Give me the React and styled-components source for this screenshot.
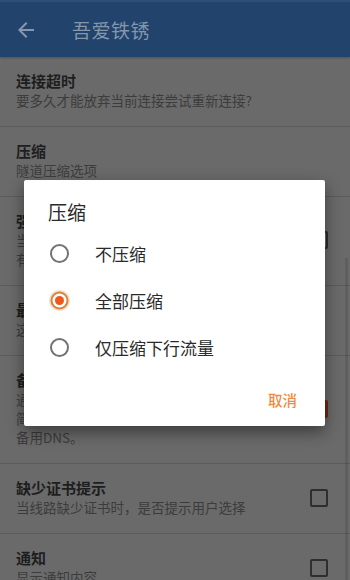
import React from "react";
import styled, { createGlobalStyle } from "styled-components";

const Global = createGlobalStyle`
  html, body { margin: 0; padding: 0; background: #6a6a6a; }
  body { font-family: "Noto Sans CJK SC", "Noto Sans", sans-serif; }
  * { box-sizing: border-box; }
`;

const Screen = styled.div`
  position: relative;
  width: 350px;
  height: 580px;
  overflow: hidden;
  background: #6a6a6a;
`;

const AppBar = styled.header`
  height: 57px;
  display: flex;
  align-items: center;
  background: #22436b;
  border-top: 2px solid #2d4e77;
  box-shadow: 0 1px 2px rgba(0, 0, 0, 0.25);
  padding: 0 0 0 14px;
`;

const BackIcon = styled.svg`
  width: 24px;
  height: 24px;
  fill: #8598ae;
  flex: none;
`;

const AppTitle = styled.h1`
  margin: 0 0 0 34px;
  font-size: 19px;
  font-weight: 400;
  color: #8497ad;
  letter-spacing: 0.5px;
`;

const List = styled.div`
  display: flex;
  flex-direction: column;
`;

const Item = styled.div`
  display: flex;
  align-items: center;
  padding: 14px 22px 16px 16px;
  border-bottom: 1px solid #5c5c5c;
`;

const ItemText = styled.div`
  flex: 1;
  min-width: 0;
`;

const ItemTitle = styled.div`
  font-size: 15px;
  line-height: 20px;
  font-weight: 700;
  color: #1e1e1e;
`;

const ItemSub = styled.div`
  font-size: 13.5px;
  line-height: 19px;
  color: #3c3c3c;
  white-space: pre-line;
`;

const Check = styled.span`
  flex: none;
  width: 18px;
  height: 18px;
  border-radius: 2px;
  border: 2px solid ${(p) => (p.$on ? "#6a2a12" : "#2e2e2e")};
  background: ${(p) => (p.$on ? "#6a2a12" : "transparent")};
  margin-left: 12px;
`;

const ScrollThumb = styled.div`
  position: absolute;
  right: 2px;
  top: 258px;
  width: 3px;
  height: 330px;
  background: rgba(0, 0, 0, 0.1);
`;

const Dialog = styled.div`
  position: absolute;
  top: 180px;
  left: 24px;
  width: 301px;
  background: #ffffff;
  border-radius: 2px;
  box-shadow: 0 6px 16px rgba(0, 0, 0, 0.45);
  padding: 20px 0 9px;
  display: flex;
  flex-direction: column;
`;

const DialogTitle = styled.div`
  padding: 0 24px;
  font-size: 19px;
  line-height: 24px;
  color: #2b2b2b;
`;

const Options = styled.div`
  margin-top: 6px;
  display: flex;
  flex-direction: column;
`;

const Option = styled.label`
  height: 47px;
  display: flex;
  align-items: center;
  padding-left: 25px;
  gap: 25px;
  font-size: 17px;
  color: #2a2a2a;
`;

const Actions = styled.div`
  margin-top: 10px;
  display: flex;
  justify-content: flex-end;
  padding-right: 20px;
`;

const TextButton = styled.button`
  height: 36px;
  border: none;
  background: none;
  padding: 0 8px;
  font-family: inherit;
  font-size: 14.5px;
  font-weight: 500;
  color: #ef8a3e;
`;

const Radio = ({ on }) => (
  <svg width="21" height="21" viewBox="0 0 21 21">
    {on ? (
      <>
        <circle cx="10.5" cy="10.5" r="9.5" fill="none" stroke="#f7dcc2" strokeWidth="2" />
        <circle cx="10.5" cy="10.5" r="8" fill="none" stroke="#d9823f" strokeWidth="2" />
        <circle cx="10.5" cy="10.5" r="4.5" fill="#f2561d" />
      </>
    ) : (
      <circle cx="10.5" cy="10.5" r="8.5" fill="none" stroke="#737373" strokeWidth="2" />
    )}
  </svg>
);

const items = [
  { t: "连接超时", s: "要多久才能放弃当前连接尝试重新连接?" },
  { t: "压缩", s: "隧道压缩选项" },
  { t: "强制使用备用线路", s: "当主线路无法连接时自动切换至备用线路，\n有助于提升连接的稳定性", c: false },
  { t: "最大重试次数", s: "这里设置连接失败后的重试次数" },
  { t: "备用DNS", s: "通过备用DNS解析线路域名，\n简化域名解析，建议开启\n备用DNS。", c: true },
  { t: "缺少证书提示", s: "当线路缺少证书时，是否提示用户选择", c: false },
  { t: "通知", s: "显示通知内容", c: false },
];

const options = ["不压缩", "全部压缩", "仅压缩下行流量"];

export default function App() {
  return (
    <Screen>
      <Global />
      <AppBar>
        <BackIcon viewBox="0 0 24 24">
          <path d="M20 11H7.83l5.59-5.59L12 4l-8 8 8 8 1.41-1.41L7.83 13H20v-2z" />
        </BackIcon>
        <AppTitle>吾爱铁锈</AppTitle>
      </AppBar>
      <List>
        {items.map((it) => (
          <Item key={it.t}>
            <ItemText>
              <ItemTitle>{it.t}</ItemTitle>
              <ItemSub>{it.s}</ItemSub>
            </ItemText>
            {it.c !== undefined && <Check $on={it.c} />}
          </Item>
        ))}
      </List>
      <ScrollThumb />
      <Dialog role="dialog">
        <DialogTitle>压缩</DialogTitle>
        <Options>
          {options.map((o, i) => (
            <Option key={o}>
              <Radio on={i === 1} />
              {o}
            </Option>
          ))}
        </Options>
        <Actions>
          <TextButton>取消</TextButton>
        </Actions>
      </Dialog>
    </Screen>
  );
}
